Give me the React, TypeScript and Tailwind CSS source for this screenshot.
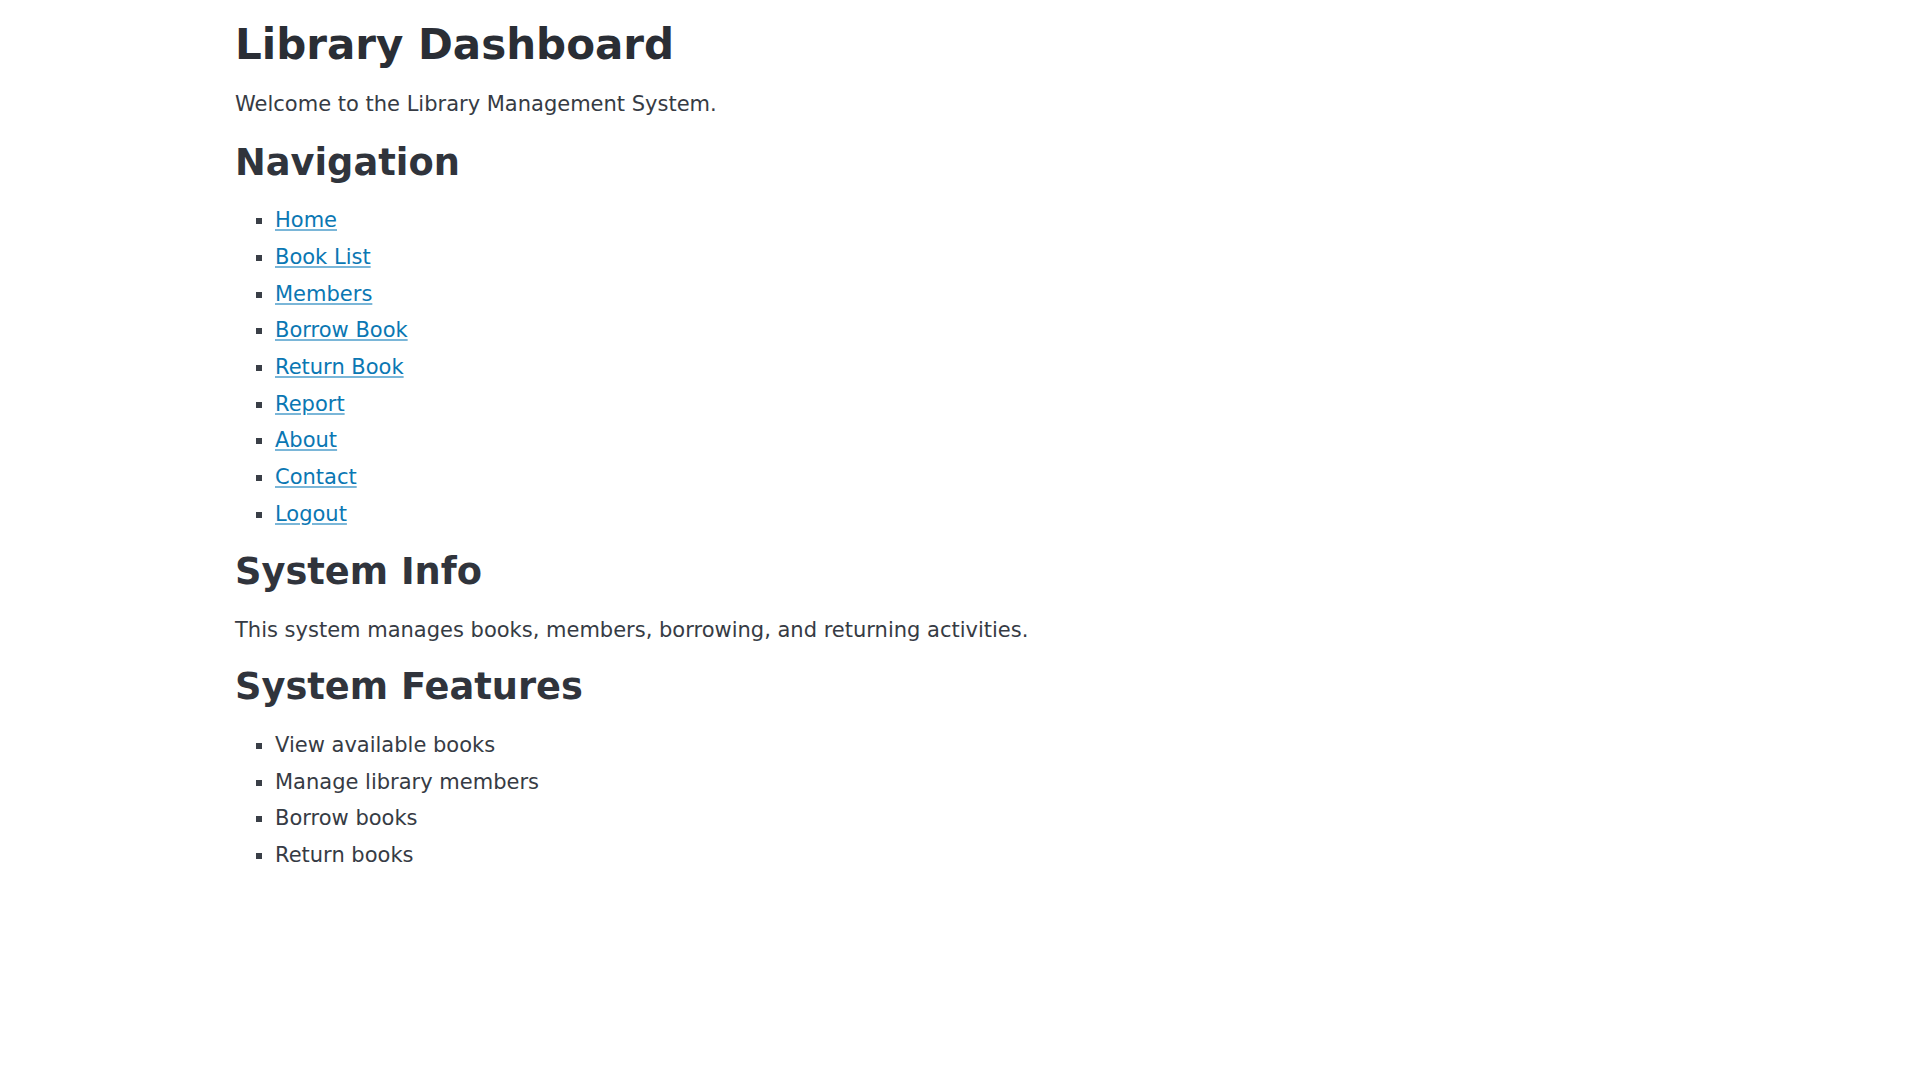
import React from "react";

const navLinks = [
  "Home",
  "Book List",
  "Members",
  "Borrow Book",
  "Return Book",
  "Report",
  "About",
  "Contact",
  "Logout",
];

const features = [
  "View available books",
  "Manage library members",
  "Borrow books",
  "Return books",
];

export default function App() {
  return (
    <div
      className="min-h-screen bg-white text-[#363b44]"
      style={{ fontFamily: '"DejaVu Sans", Verdana, sans-serif' }}
    >
      <div className="mx-auto w-[1450px] text-[21px]">
        <h1 className="pt-[19.7px] text-[42px] font-bold leading-[50.4px] text-[#2a2e35]">
          Library Dashboard
        </h1>
        <p className="mt-[17.9px] leading-[33.28px]">
          Welcome to the Library Management System.
        </p>
        <h2 className="mt-[20px] text-[36.75px] font-bold leading-[44.1px] text-[#30343c]">
          Navigation
        </h2>
        <ul className="mt-[16.8px] list-[square] pl-[40px] marker:text-[#3a3f47]">
          {navLinks.map((l) => (
            <li key={l} className="leading-[36.7px]">
              <a
                href="#"
                className="text-[#0a77b3] underline decoration-[#7ab6d8] decoration-2 underline-offset-[2px]"
              >
                {l}
              </a>
            </li>
          ))}
        </ul>
        <h2 className="mt-[17.3px] text-[36.75px] font-bold leading-[44.1px] text-[#30343c]">
          System Info
        </h2>
        <p className="mt-[20.2px] leading-[33.28px]">
          This system manages books, members, borrowing, and returning activities.
        </p>
        <h2 className="mt-[18px] text-[36.75px] font-bold leading-[44.1px] text-[#30343c]">
          System Features
        </h2>
        <ul className="mt-[17.6px] list-[square] pl-[40px] marker:text-[#3a3f47]">
          {features.map((f) => (
            <li key={f} className="leading-[36.7px]">
              {f}
            </li>
          ))}
        </ul>
      </div>
    </div>
  );
}
